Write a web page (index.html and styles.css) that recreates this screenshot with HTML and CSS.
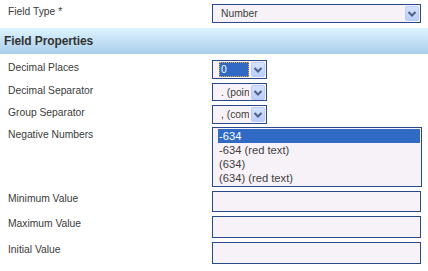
FILE: index.html
```html
<!DOCTYPE html>
<html>
<head>
<meta charset="utf-8">
<link rel="stylesheet" href="styles.css">
</head>
<body>
<div class="form">
  <div class="field r-type">
    <label class="lbl">Field Type *</label>
    <div class="select wide">
      <span class="val">Number</span>
      <span class="btn"><svg width="14" height="15" viewBox="0 0 14 15"><path d="M3.5 6 L7 9.5 L10.5 6" fill="none" stroke="#4d6185" stroke-width="2"/></svg></span>
    </div>
  </div>

  <div class="section">Field Properties</div>

  <div class="field r-dp">
    <label class="lbl">Decimal Places</label>
    <div class="select small">
      <span class="val focus">0</span>
      <span class="btn"><svg width="14" height="15" viewBox="0 0 14 15"><path d="M3.5 6 L7 9.5 L10.5 6" fill="none" stroke="#4d6185" stroke-width="2"/></svg></span>
    </div>
  </div>

  <div class="field r-ds">
    <label class="lbl">Decimal Separator</label>
    <div class="select small short">
      <span class="val">. (point)</span>
      <span class="btn"><svg width="14" height="15" viewBox="0 0 14 15"><path d="M3.5 6 L7 9.5 L10.5 6" fill="none" stroke="#4d6185" stroke-width="2"/></svg></span>
    </div>
  </div>

  <div class="field r-gs">
    <label class="lbl">Group Separator</label>
    <div class="select small">
      <span class="val">, (comma)</span>
      <span class="btn"><svg width="14" height="15" viewBox="0 0 14 15"><path d="M3.5 6 L7 9.5 L10.5 6" fill="none" stroke="#4d6185" stroke-width="2"/></svg></span>
    </div>
  </div>

  <div class="field r-nn">
    <label class="lbl">Negative Numbers</label>
    <div class="listbox">
      <div class="opt selected">-634</div>
      <div class="opt">-634 (red text)</div>
      <div class="opt">(634)</div>
      <div class="opt">(634) (red text)</div>
    </div>
  </div>

  <div class="field r-min">
    <label class="lbl">Minimum Value</label>
    <input class="text h21" type="text">
  </div>

  <div class="field r-max">
    <label class="lbl">Maximum Value</label>
    <input class="text" type="text">
  </div>

  <div class="field r-init">
    <label class="lbl">Initial Value</label>
    <input class="text" type="text">
  </div>
</div>
</body>
</html>
```

FILE: styles.css
```css
html, body {
  margin: 0;
  padding: 0;
  background: #ffffff;
}

body {
  font-family: "Liberation Sans", Arial, sans-serif;
  color: #3b3b3b;
}

.form {
  padding-top: 4px;
}

.field {
  display: flex;
  align-items: flex-start;
}

.lbl {
  box-sizing: border-box;
  width: 212px;
  padding-left: 8px;
  padding-top: 2px;
  font-size: 10.3px;
  line-height: 12px;
}

.r-dp { margin-top: 6px; }
.r-ds { margin-top: 4px; }
.r-gs { margin-top: 4px; }
.r-nn { margin-top: 3px; }
.r-min { margin-top: 4px; }
.r-max { margin-top: 4px; }
.r-init { margin-top: 4px; }

.select {
  box-sizing: border-box;
  height: 19px;
  border: 1px solid #284a8c;
  background: #f7f2f7;
  display: flex;
  align-items: center;
  padding: 0 1px 0 6px;
}

.select.short {
  height: 18px;
}

.wide {
  width: 209px;
}

.small {
  width: 55px;
}

.val {
  flex: 1;
  min-width: 0;
  box-sizing: border-box;
  height: 15px;
  padding-left: 2px;
  margin-right: 2px;
  font-size: 10.3px;
  line-height: 15px;
  white-space: nowrap;
  overflow: hidden;
  color: #404040;
}

.val.focus {
  background: #316ac5;
  color: #ffffff;
  outline: 1px dotted #e9a93c;
  outline-offset: -1px;
}

.btn {
  flex: none;
  width: 14px;
  height: 15px;
  box-sizing: border-box;
  border: 1px solid #b9cdf6;
  border-radius: 2px;
  background: linear-gradient(#d5e2fd, #b8cefa);
  display: flex;
}

.btn svg {
  margin: -1px;
}

.section {
  margin-top: 5px;
  height: 26px;
  line-height: 26px;
  padding-left: 4px;
  font-size: 12px;
  font-weight: bold;
  letter-spacing: -0.1px;
  color: #333333;
  background: linear-gradient(#dff4ff, #a9cdea);
}

.listbox {
  box-sizing: border-box;
  width: 210px;
  height: 60px;
  border: 1px solid #284a8c;
  background: #f7f2f7;
  padding: 1px 1px 1px 5px;
}

.opt {
  height: 14px;
  line-height: 14px;
  padding-left: 1px;
  font-size: 11.2px;
  color: #404040;
  white-space: nowrap;
}

.opt.selected {
  background: #316ac5;
  color: #ffffff;
}

.text {
  box-sizing: border-box;
  display: block;
  margin: 0;
  padding: 0;
  width: 209px;
  height: 22px;
  border: 1px solid #284a8c;
  background: #f7f2f7;
  outline: none;
}

.text.h21 {
  height: 21px;
}
```
